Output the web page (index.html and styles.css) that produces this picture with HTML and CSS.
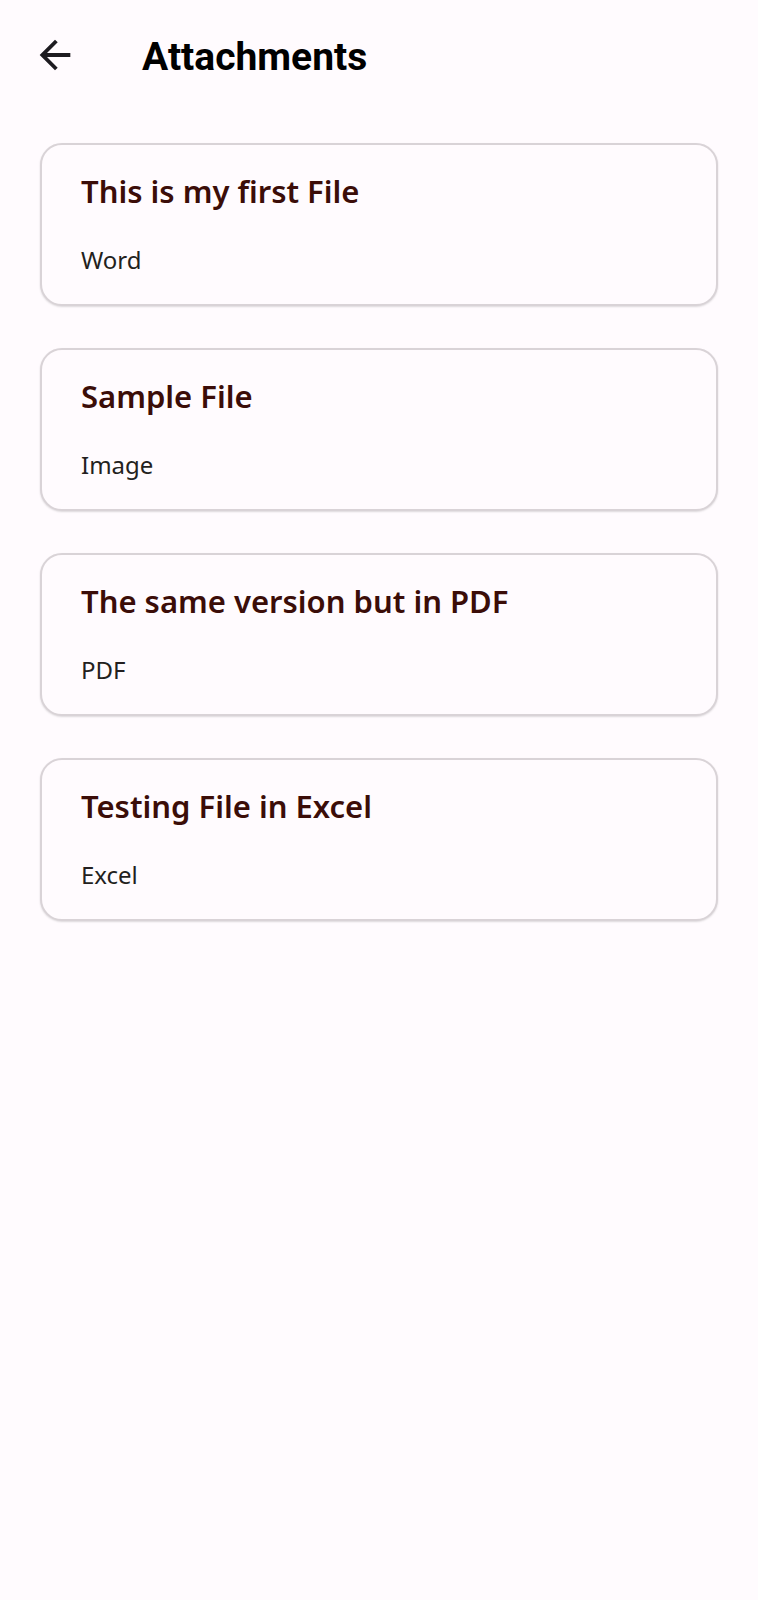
FILE: index.html
```html
<!DOCTYPE html>
<html>
<head>
<meta charset="utf-8">
<link rel="stylesheet" href="styles.css">
</head>
<body>
<header class="appbar">
  <button class="back" aria-label="Back">
    <svg width="46" height="46" viewBox="0 0 24 24"><path d="M20 11H7.83l5.59-5.59L12 4l-8 8 8 8 1.41-1.41L7.83 13H20v-2z" fill="#1d1b20"/></svg>
  </button>
  <h1 class="title">Attachments</h1>
</header>
<main class="list">
  <div class="card"><div class="card-title">This is my first File</div><div class="card-sub">Word</div></div>
  <div class="card"><div class="card-title">Sample File</div><div class="card-sub">Image</div></div>
  <div class="card"><div class="card-title">The same version but in PDF</div><div class="card-sub">PDF</div></div>
  <div class="card"><div class="card-title">Testing File in Excel</div><div class="card-sub">Excel</div></div>
</main>
</body>
</html>
```
FILE: styles.css
```css
html, body { margin: 0; padding: 0; }
body { background: #fffbfe; width: 758px; min-height: 1600px; font-family: "Noto Sans", sans-serif; }
.appbar { display: flex; align-items: flex-start; height: 110px; padding: 32px 0 0 32px; box-sizing: border-box; }
.back { background: none; border: 0; padding: 0; width: 46px; height: 46px; display: flex; }
.title { margin: 2px 0 0 64px; font-family: Roboto, sans-serif; font-weight: 700; font-size: 39px; line-height: 46px; color: #000; }
.list { display: flex; flex-direction: column; gap: 42px; padding: 33px 40px 0 40px; }
.card { height: 163px; box-sizing: border-box; border: 2px solid #d9d3d7; border-radius: 22px; box-shadow: 0 1px 2px rgba(0,0,0,0.14); padding: 26px 39px 0 39px; background: #fffbfe; }
.card-title { font-size: 31px; font-weight: 600; color: #3b0d08; line-height: 40px; }
.card-sub { font-size: 24px; color: #231f20; margin-top: 34px; line-height: 30px; }
```
